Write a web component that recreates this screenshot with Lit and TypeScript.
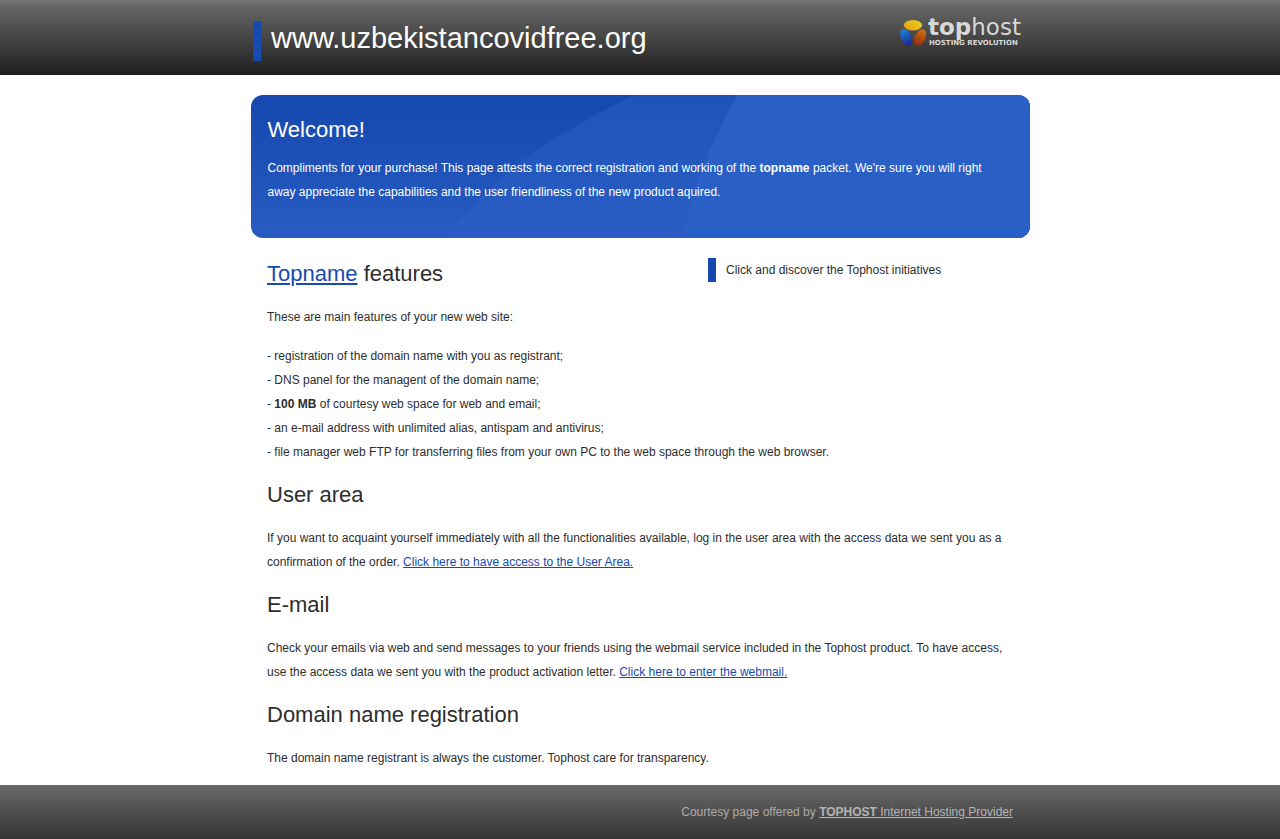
import { LitElement, html, css } from "lit";
import { customElement, property } from "lit/decorators.js";

@customElement("top-logo")
class TopLogo extends LitElement {
  static styles = css`
    :host { display: block; }
    svg { display: block; }
    .name { font: 23px "DejaVu Sans", Verdana, sans-serif; fill: #d8d8d8; }
    .name .strong { font-weight: bold; }
    .motto { font: bold 7px "DejaVu Sans", Verdana, sans-serif; fill: #d8d8d8; }
  `;
  render() {
    return html`
      <svg width="128" height="42" viewBox="0 -10 128 42" role="img" aria-label="tophost hosting revolution">
        <defs>
          <linearGradient id="gold" x1="0" y1="1" x2="1" y2="0">
            <stop offset="0" stop-color="#e39a16" /><stop offset="1" stop-color="#e8d41c" />
          </linearGradient>
          <linearGradient id="blue" x1="0" y1="0" x2="0" y2="1">
            <stop offset="0" stop-color="#1688dc" /><stop offset="1" stop-color="#231e86" />
          </linearGradient>
          <linearGradient id="rust" x1="0" y1="0" x2="0" y2="1">
            <stop offset="0" stop-color="#d4740f" /><stop offset="1" stop-color="#8d2510" />
          </linearGradient>
        </defs>
        <ellipse cx="14" cy="7.200" rx="9.200" ry="5.300" fill="url(#gold)" />
        <ellipse cx="7.300" cy="19.700" rx="5.200" ry="9" transform="rotate(-26 7.300 19.700)" fill="url(#blue)" />
        <ellipse cx="21" cy="19.700" rx="5.200" ry="9" transform="rotate(26 21 19.700)" fill="url(#rust)" />
        <text class="name" x="29" y="17"><tspan class="strong">top</tspan><tspan>host</tspan></text>
        <text class="motto" x="30" y="27">HOSTING REVOLUTION</text>
      </svg>
    `;
  }
}

@customElement("app-root")
class AppRoot extends LitElement {
  @property() domain = "www.uzbekistancovidfree.org";

  static styles = css`
    :host {
      display: flex;
      flex-direction: column;
      min-height: 100vh;
      background: #fff;
      color: #2d2d2d;
      font: 12px/24px "Liberation Sans", Arial, sans-serif;
    }
    h1, h2, p { margin: 0; font-weight: normal; }
    a { color: #174ab0; }
    .wrap { box-sizing: border-box; width: 100%; max-width: 780px; margin: 0 auto; }
    .top { background: linear-gradient(#747474, #666 8%, #222 96%, #1e1e1e); }
    .bar {
      display: flex;
      justify-content: space-between;
      align-items: flex-start;
      min-height: 75px;
      padding: 8px 3px 0;
    }
    .bar h1 {
      margin-top: 13px;
      padding: 0 0 6px 10px;
      border-left: 8px solid #174ab0;
      color: #fff;
      font-size: 29px;
      line-height: 34px;
    }
    h2 { font-size: 22px; line-height: 32px; }
    main { flex: 1; padding: 20px 0 15px; }
    .wrap.banner {
      position: relative;
      overflow: hidden;
      max-width: 779px;
      min-height: 143px;
      padding: 19px 17px 34px;
      border-radius: 12px;
      color: #fff;
    }
    .banner svg { position: absolute; inset: 0; width: 100%; height: 100%; }
    .banner h2, .banner p { position: relative; }
    .banner p { margin-top: 10px; }
    .content { display: flow-root; padding: 20px 17px 0; }
    .content h2 { margin: 15px 0; }
    .content h2:first-of-type { margin-top: 0; }
    .content p + p { margin-top: 15px; }
    aside {
      float: right;
      box-sizing: border-box;
      width: 305px;
      padding-left: 10px;
      border-left: 8px solid #174ab0;
    }
    footer { background: linear-gradient(#6a6a6a, #333); color: #aaa; }
    footer .wrap { padding: 15px 17px; text-align: right; }
    footer a { color: #b4b4b4; }
  `;

  render() {
    return html`
      <header class="top">
        <div class="wrap bar">
          <h1>${this.domain}</h1>
          <top-logo></top-logo>
        </div>
      </header>
      <main>
        <section class="wrap banner">
          <svg viewBox="0 0 780 143" preserveAspectRatio="none" aria-hidden="true">
            <defs>
              <linearGradient id="deep" x1="0" y1="0" x2="0" y2="1">
                <stop offset="0.100" stop-color="#174ab0" /><stop offset="1" stop-color="#285cc3" />
              </linearGradient>
              <linearGradient id="mid" gradientUnits="userSpaceOnUse" x1="0" y1="0" x2="0" y2="143">
                <stop offset="0" stop-color="#1f53b9" /><stop offset="0.900" stop-color="#295dc4" />
              </linearGradient>
            </defs>
            <rect width="780" height="143" fill="url(#deep)" />
            <path d="M384 0Q252 63 195 143H780V0Z" fill="url(#mid)" />
            <path d="M487 0Q444 75 432 143H780V0Z" fill="#2a5fc6" />
          </svg>
          <h2>Welcome!</h2>
          <p>Compliments for your purchase! This page attests the correct registration and working of the <b>topname</b> packet. We're sure you will right away appreciate the capabilities and the user friendliness of the new product aquired.</p>
        </section>
        <div class="wrap content">
          <aside>Click and discover the Tophost initiatives</aside>
          <h2><a href="#topname">Topname</a> features</h2>
          <p>These are main features of your new web site:</p>
          <p>
            - registration of the domain name with you as registrant;<br />
            - DNS panel for the managent of the domain name;<br />
            - <b>100 MB</b> of courtesy web space for web and email;<br />
            - an e-mail address with unlimited alias, antispam and antivirus;<br />
            - file manager web FTP for transferring files from your own PC to the web space through the web browser.
          </p>
          <h2>User area</h2>
          <p>If you want to acquaint yourself immediately with all the functionalities available, log in the user area with the access data we sent you as a confirmation of the order. <a href="#user-area">Click here to have access to the User Area.</a></p>
          <h2>E-mail</h2>
          <p>Check your emails via web and send messages to your friends using the webmail service included in the Tophost product. To have access, use the access data we sent you with the product activation letter. <a href="#webmail">Click here to enter the webmail.</a></p>
          <h2>Domain name registration</h2>
          <p>The domain name registrant is always the customer. Tophost care for transparency.</p>
        </div>
      </main>
      <footer>
        <div class="wrap">Courtesy page offered by <a href="#tophost"><b>TOPHOST</b> Internet Hosting Provider</a></div>
      </footer>
    `;
  }
}
